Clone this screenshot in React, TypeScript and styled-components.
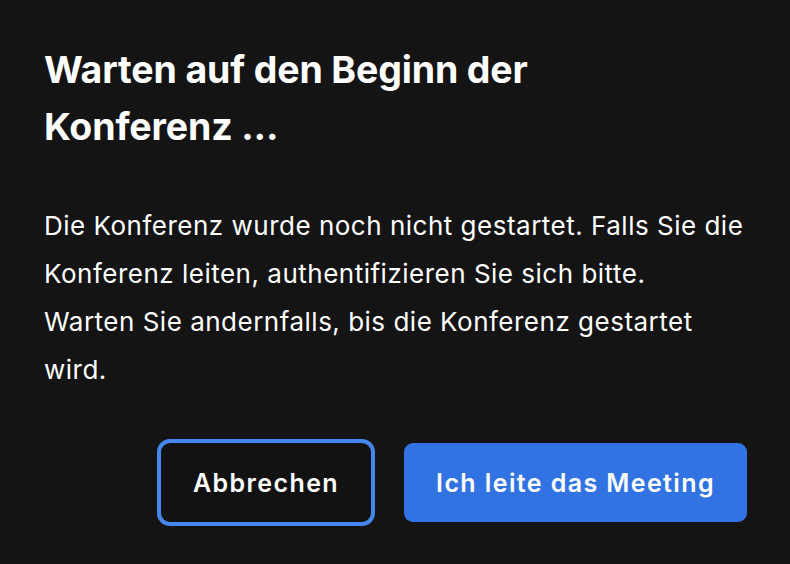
import React from "react";
import styled, { createGlobalStyle } from "styled-components";

const GlobalStyle = createGlobalStyle`
  html, body {
    margin: 0;
    padding: 0;
    background: #141414;
  }
  body {
    font-family: Inter, "Noto Sans", "Liberation Sans", sans-serif;
    -webkit-font-smoothing: antialiased;
  }
`;

const Dialog = styled.div`
  box-sizing: border-box;
  width: 790px;
  height: 564px;
  padding: 41px 43px 0 44px;
  background: #141414;
  color: #ffffff;
  display: flex;
  flex-direction: column;
`;

const Title = styled.h1`
  margin: 0;
  max-width: 600px;
  font-size: 37.5px;
  line-height: 57px;
  font-weight: 700;
  color: #ffffff;
  letter-spacing: -0.15px;
`;

const Body = styled.p`
  margin: 47px 0 0 0;
  font-size: 26px;
  line-height: 48px;
  font-weight: 400;
  color: #ffffff;
  letter-spacing: 0.5px;
`;

const Actions = styled.div`
  margin-top: 49px;
  display: flex;
  justify-content: flex-end;
  gap: 33px;
`;

const Button = styled.button<{ $primary?: boolean; $focused?: boolean }>`
  height: 79px;
  padding: 0 32px;
  border: none;
  border-radius: 9px;
  font-family: inherit;
  font-size: 25px;
  font-weight: 600;
  letter-spacing: 1.4px;
  color: #ffffff;
  background: ${(p) => (p.$primary ? "#3273e3" : "#121212")};
  box-shadow: ${(p) => (p.$focused ? "0 0 0 4px #4687ed" : "none")};
  cursor: pointer;
`;

export default function App() {
  return (
    <>
      <GlobalStyle />
      <Dialog>
        <Title>Warten auf den Beginn der Konferenz ...</Title>
        <Body>
          Die Konferenz wurde noch nicht gestartet. Falls Sie die Konferenz
          leiten, authentifizieren Sie sich bitte.
          <br />
          Warten Sie andernfalls, bis die Konferenz gestartet wird.
        </Body>
        <Actions>
          <Button $focused>Abbrechen</Button>
          <Button $primary>Ich leite das Meeting</Button>
        </Actions>
      </Dialog>
    </>
  );
}
